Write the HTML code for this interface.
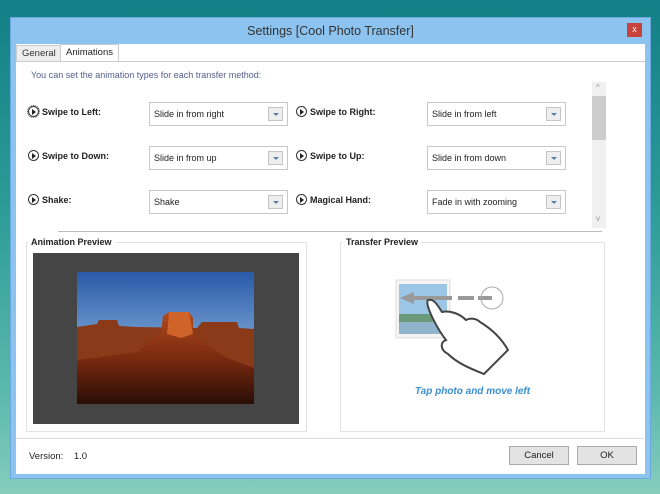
<!DOCTYPE html>
<html><head><style>
*{margin:0;padding:0;box-sizing:border-box}
body{width:660px;height:494px;overflow:hidden;position:relative;font-family:"Liberation Sans",sans-serif;font-size:9px;color:#222;background:linear-gradient(180deg,#137f86 0%,#2a9a96 40%,#5cb9ad 80%,#86cdbd 100%)}
.a{position:absolute}
.win{left:10px;top:17px;width:641px;height:462px;background:#8cc3ef;border:1px solid #6aa8de}
.title{left:0;top:0;width:639px;height:26px;text-align:center;line-height:26px;font-size:12.5px;color:#333}
.close{left:616px;top:5px;width:15px;height:14px;background:#c9413b;color:#fff;font-size:9px;line-height:13px;text-align:center}
.client{left:5px;top:26px;width:629px;height:430px;background:#fff}
.tab{top:1px;height:17px;line-height:16px;padding:0 5px;border:1px solid #ccc;font-size:9.5px}
.cb{width:139px;height:24px;border:1px solid #c8c8c8;background:#fff;line-height:22px;padding-left:4px;font-size:9px}
.cb i{position:absolute;right:4px;top:4px;width:15px;height:14px;border:1px solid #c5c5c5;background:#eee}
.cb i:after{content:"";position:absolute;left:4px;top:5px;border-left:3px solid transparent;border-right:3px solid transparent;border-top:3px solid #5a7fa8}
.lb{font-weight:bold;font-size:9px;line-height:12px}
.pl{display:inline-block;width:11px;height:11px;border:1px solid #333;border-radius:50%;vertical-align:-2px;margin-right:3px;position:relative}
.pl:after{content:"";position:absolute;left:3px;top:2px;border-top:3px solid transparent;border-bottom:3px solid transparent;border-left:4px solid #222}
.grp{border:1px solid #e3e3e3}
.gt{font-weight:bold;font-size:9px;background:#fff;padding:0 3px}
.btn{width:60px;height:19px;border:1px solid #aaa;background:#e3e3e3;text-align:center;line-height:17px;font-size:9.5px}
</style></head><body>
<div class="a win">
 <div class="a title">Settings [Cool Photo Transfer]</div>
 <div class="a close">x</div>
 <div class="a client">
  <div class="a tab" style="left:0;top:1px;background:#eee;color:#333">General</div>
  <div class="a tab" style="left:44px;top:0;height:18px;background:#fff;border-bottom:none">Animations</div>
  <div class="a" style="left:0;top:17px;width:629px;height:1px;background:#ccc"></div>
 </div>
</div>
<div class="a" style="left:31px;top:70px;color:#53608a;font-size:9px">You can set the animation types for each transfer method:</div>
<div class="a lb" style="left:28px;top:106px"><span class="pl" style="outline:1px dotted #555"></span>Swipe to Left:</div>
<div class="a lb" style="left:28px;top:150px"><span class="pl"></span>Swipe to Down:</div>
<div class="a lb" style="left:28px;top:194px"><span class="pl"></span>Shake:</div>
<div class="a lb" style="left:296px;top:106px"><span class="pl"></span>Swipe to Right:</div>
<div class="a lb" style="left:296px;top:150px"><span class="pl"></span>Swipe to Up:</div>
<div class="a lb" style="left:296px;top:194px"><span class="pl"></span>Magical Hand:</div>
<div class="a cb" style="left:149px;top:102px">Slide in from right<i></i></div>
<div class="a cb" style="left:149px;top:146px">Slide in from up<i></i></div>
<div class="a cb" style="left:149px;top:190px">Shake<i></i></div>
<div class="a cb" style="left:427px;top:102px">Slide in from left<i></i></div>
<div class="a cb" style="left:427px;top:146px">Slide in from down<i></i></div>
<div class="a cb" style="left:427px;top:190px">Fade in with zooming<i></i></div>
<div class="a" style="left:592px;top:82px;width:14px;height:146px;background:#f0f0f0"></div>
<div class="a" style="left:592px;top:96px;width:14px;height:44px;background:#cdcdcd"></div>
<div class="a" style="left:596px;top:83px;font-size:8px;color:#999">^</div>
<div class="a" style="left:596px;top:214px;font-size:8px;color:#999">v</div>
<div class="a" style="left:58px;top:231px;width:544px;height:1px;background:#bbb"></div>
<div class="a grp" style="left:26px;top:242px;width:281px;height:190px"></div>
<div class="a gt" style="left:28px;top:237px">Animation Preview</div>
<div class="a" style="left:33px;top:253px;width:266px;height:171px;background:#454545"></div>
<svg class="a" style="left:77px;top:272px" width="177" height="132" viewBox="0 0 177 132">
 <defs><linearGradient id="s" x1="0" y1="0" x2="0" y2="1"><stop offset="0" stop-color="#2a5aa8"/><stop offset="0.6" stop-color="#7da6d6"/><stop offset="1" stop-color="#d9b9a0"/></linearGradient>
 <linearGradient id="g" x1="0" y1="0" x2="0" y2="1"><stop offset="0" stop-color="#b04a1c"/><stop offset="0.5" stop-color="#7a2a10"/><stop offset="1" stop-color="#2a0e06"/></linearGradient></defs>
 <rect width="177" height="132" fill="url(#s)"/>
 <path d="M0 55 L20 52 L22 48 L40 48 L42 54 L60 55 L120 56 L125 50 L160 50 L162 56 L177 57 L177 132 L0 132Z" fill="#8a3a18"/>
 <path d="M60 80 L72 70 L84 62 L86 44 L92 40 L112 40 L116 46 L116 62 L128 72 L150 86 L177 96 L177 132 L0 132 L0 88Z" fill="url(#g)"/>
 <path d="M92 40 L112 40 L116 62 L104 66 L90 62Z" fill="#d0632a"/>
</svg>
<div class="a grp" style="left:340px;top:242px;width:265px;height:190px"></div>
<div class="a gt" style="left:343px;top:237px">Transfer Preview</div>
<svg class="a" style="left:390px;top:270px" width="150" height="110" viewBox="0 0 150 110">
 <rect x="6" y="10" width="54" height="58" fill="#f4f4f4" stroke="#ddd"/>
 <rect x="9" y="14" width="48" height="50" fill="#9cc6e6"/>
 <rect x="9" y="44" width="48" height="20" fill="#6a9a7a"/>
 <rect x="9" y="52" width="48" height="12" fill="#8fb4cc"/>
 <path d="M10 28 L24 22 L24 26 L62 26 L62 30 L24 30 L24 34 Z" fill="#999"/>
 <rect x="68" y="26" width="16" height="4" fill="#999"/><rect x="88" y="26" width="14" height="4" fill="#999"/>
 <circle cx="102" cy="28" r="11" fill="none" stroke="#aaa"/>
 <path d="M38 30 C34 34 48 60 56 70 C50 72 50 80 58 84 C68 94 84 100 94 104 L118 80 C110 66 100 58 90 52 C86 48 80 48 76 50 C70 44 60 40 52 42 C48 36 44 28 38 30 Z" fill="#fff" stroke="#444" stroke-width="2"/>
</svg>
<div class="a" style="left:340px;top:386px;width:265px;text-align:center;color:#3a8fd2;font-weight:bold;font-style:italic;font-size:10px">Tap photo and move left</div>
<div class="a" style="left:16px;top:438px;width:628px;height:1px;background:#ddd"></div>
<div class="a" style="left:29px;top:451px;font-size:9.5px">Version:&nbsp;&nbsp;&nbsp; 1.0</div>
<div class="a btn" style="left:509px;top:446px">Cancel</div>
<div class="a btn" style="left:577px;top:446px">OK</div>
</body></html>
